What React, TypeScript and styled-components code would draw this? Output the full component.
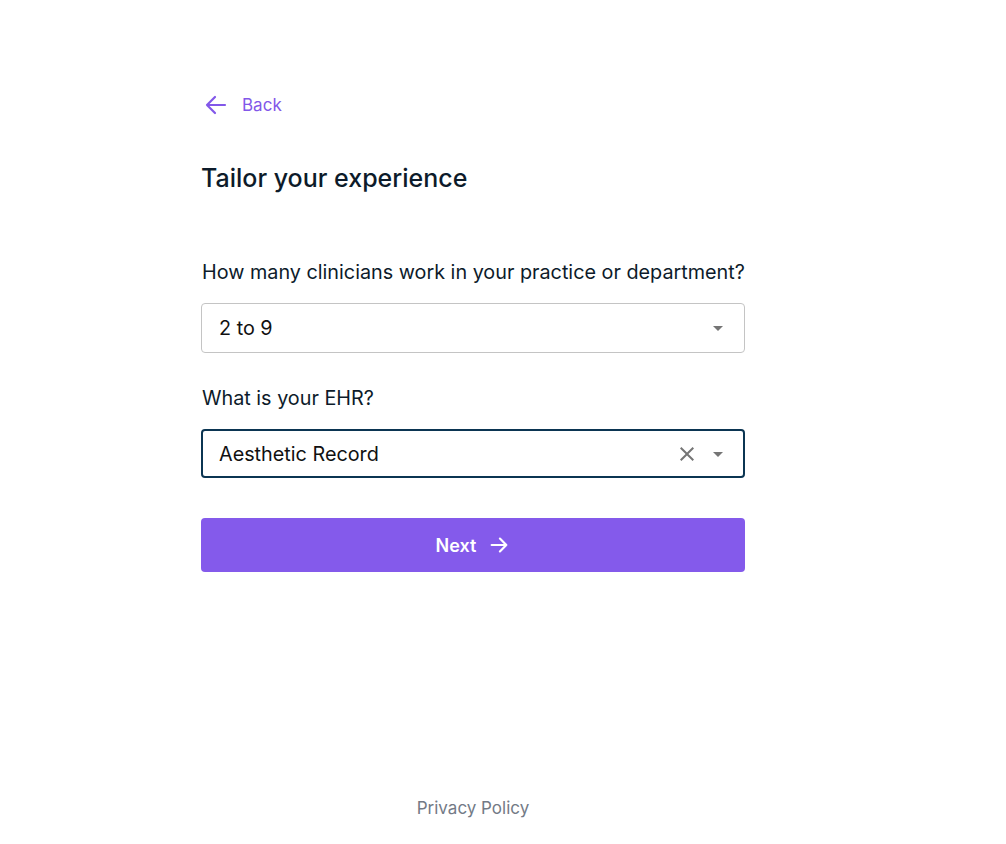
import React from "react";
import styled, { createGlobalStyle } from "styled-components";

const GlobalStyle = createGlobalStyle`
  html, body {
    margin: 0;
    padding: 0;
    background: #ffffff;
  }
  body {
    font-family: Inter, "Noto Sans", sans-serif;
    color: #0d1b2a;
  }
`;

const Page = styled.div`
  width: calc(100% - 60px);
  min-height: 100vh;
  display: flex;
  flex-direction: column;
  align-items: center;
`;

const Form = styled.div`
  width: 544px;
  padding-top: 93px;
  display: flex;
  flex-direction: column;
`;

const BackLink = styled.a`
  display: flex;
  align-items: center;
  gap: 14px;
  height: 24px;
  color: #8257e9;
  font-size: 17px;
  text-decoration: none;
  cursor: pointer;
  padding-left: 3px;
`;

const Title = styled.h1`
  margin: 45px 0 0;
  font-size: 25px;
  line-height: 32px;
  font-weight: 500;
  color: #0d1b2a;
  padding-left: 0;
`;

const Label = styled.label<{ $top: number }>`
  margin-top: ${(p) => p.$top}px;
  font-size: 19.8px;
  line-height: 24px;
  color: #0d1b2a;
  padding-left: 1px;
`;

const Select = styled.div<{ $focused?: boolean }>`
  margin-top: 19px;
  box-sizing: border-box;
  height: ${(p) => (p.$focused ? 49 : 50)}px;
  display: flex;
  align-items: center;
  padding: 0 ${(p) => (p.$focused ? 13 : 14)}px 0 ${(p) => (p.$focused ? 16 : 17)}px;
  border: ${(p) => (p.$focused ? "2px solid #0b3552" : "1px solid #c4c4c4")};
  border-radius: 4px;
  font-size: 19.8px;
  color: #111111;
`;

const Value = styled.span`
  flex: 1;
`;

const IconButton = styled.span<{ $gap?: number }>`
  display: flex;
  align-items: center;
  justify-content: center;
  margin-right: ${(p) => p.$gap ?? 0}px;
  color: #757575;
`;

const NextButton = styled.button`
  margin-top: 40px;
  height: 54px;
  border: none;
  border-radius: 4px;
  background: #845aeb;
  color: #ffffff;
  font-family: Inter, "Noto Sans", sans-serif;
  font-size: 18px;
  font-weight: 600;
  display: flex;
  align-items: center;
  justify-content: center;
  gap: 12px;
  cursor: pointer;
`;

const Footer = styled.footer`
  margin-top: auto;
  padding-bottom: 24px;
  font-size: 17px;
  line-height: 24px;
  color: #737a86;
`;

const ArrowLeft = () => (
  <svg width="24" height="24" viewBox="0 0 24 24" fill="none" stroke="currentColor" strokeWidth="2.2" strokeLinecap="round" strokeLinejoin="round">
    <path d="M21 12H3M11 4l-8 8 8 8" />
  </svg>
);

const ArrowRight = () => (
  <svg width="22" height="22" viewBox="0 0 24 24" fill="none" stroke="currentColor" strokeWidth="2.4" strokeLinecap="round" strokeLinejoin="round">
    <path d="M4 12h16M13 5l7 7-7 7" />
  </svg>
);

const DropDown = () => (
  <svg width="24" height="24" viewBox="0 0 24 24" fill="currentColor">
    <path d="M7 10l5 5 5-5z" />
  </svg>
);

const Close = () => (
  <svg width="24" height="24" viewBox="0 0 24 24" fill="currentColor">
    <path d="M19 6.41 17.59 5 12 10.59 6.41 5 5 6.41 10.59 12 5 17.59 6.41 19 12 13.41 17.59 19 19 17.59 13.41 12z" />
  </svg>
);

export default function App() {
  return (
    <>
      <GlobalStyle />
      <Page>
        <Form>
          <BackLink>
            <ArrowLeft />
            Back
          </BackLink>
          <Title>Tailor your experience</Title>
          <Label $top={66}>How many clinicians work in your practice or department?</Label>
          <Select>
            <Value>2 to 9</Value>
            <IconButton>
              <DropDown />
            </IconButton>
          </Select>
          <Label $top={33}>What is your EHR?</Label>
          <Select $focused>
            <Value>Aesthetic Record</Value>
            <IconButton $gap={7}>
              <Close />
            </IconButton>
            <IconButton>
              <DropDown />
            </IconButton>
          </Select>
          <NextButton>
            Next
            <ArrowRight />
          </NextButton>
        </Form>
        <Footer>Privacy Policy</Footer>
      </Page>
    </>
  );
}
